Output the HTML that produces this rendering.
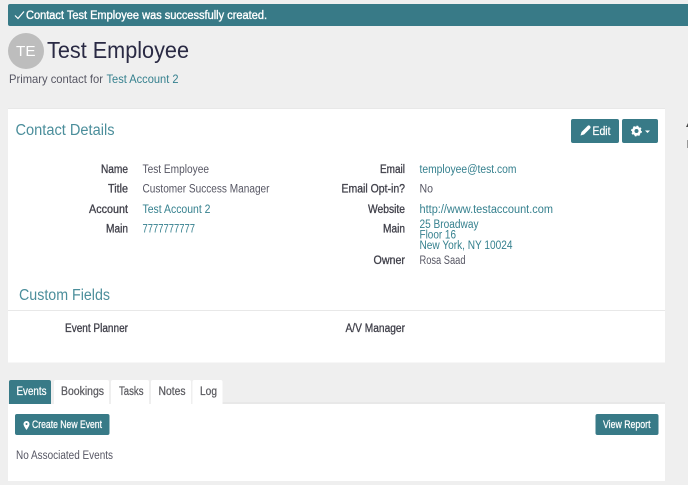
<!DOCTYPE html>
<html><head><meta charset="utf-8"><style>
html,body{margin:0;padding:0;background:#efefef;width:688px;height:485px;overflow:hidden}
svg{display:block}
text{font-family:"Liberation Sans",sans-serif;font-size:11.500px;fill:#565663}
.l{fill:#40404a;font-size:11.500px;stroke:#40404a;stroke-width:.3px}
.a{fill:#35808e}
.h{fill:#4b8e9b;font-size:15.500px}
.w{fill:#fff;stroke:#fff;stroke-width:.25px}
.t{fill:#5b5b60;stroke:#5b5b60;stroke-width:.25px;font-size:11.500px}
</style></head><body>
<svg width="688" height="485" viewBox="0 0 688 485" xmlns="http://www.w3.org/2000/svg" style="filter:blur(.35px)">
<rect width="688" height="485" fill="#efefef"/>
<!-- banner -->
<path d="M688 4H10a2 2 0 0 0-2 2v18a2 2 0 0 0 2 2h678z" fill="#387a87"/>
<path d="M15 15.500l3 3 6-7" fill="none" stroke="#fff" stroke-width="1.200"/>
<text x="26" y="19" class="w" style="font-size:11.500px;stroke-width:.35px" textLength="241" lengthAdjust="spacingAndGlyphs">Contact Test Employee was successfully created.</text>
<!-- header -->
<circle cx="26" cy="51" r="18" fill="#bdbdbd"/>
<text x="16" y="56" style="font-size:14.500px;fill:#fff" textLength="19.500" lengthAdjust="spacingAndGlyphs">TE</text>
<text x="47" y="58" style="font-size:23px;fill:#2a2a44" textLength="142" lengthAdjust="spacingAndGlyphs">Test Employee</text>
<text x="9" y="83" style="font-size:12px" textLength="94" lengthAdjust="spacingAndGlyphs">Primary contact for</text>
<text x="106.500" y="83" class="a" style="font-size:12px" textLength="72" lengthAdjust="spacingAndGlyphs">Test Account 2</text>
<!-- card -->
<rect x="8" y="108.500" width="657" height="254" fill="#fff"/>
<rect x="8" y="108" width="657" height="1" fill="#e8e8e8"/>
<text x="15.500" y="135" class="h" textLength="99" lengthAdjust="spacingAndGlyphs">Contact Details</text>
<rect x="571" y="119" width="48" height="24" rx="2" fill="#387a87"/>
<path d="M580.500 135.500l1-3.500 6-6a1.300 1.300 0 0 1 2.500 2.500l-6 6z" fill="#fff"/>
<text x="592.500" y="135" class="w" textLength="18" lengthAdjust="spacingAndGlyphs" style="font-size:11.500px">Edit</text>
<rect x="622" y="119" width="36" height="24" rx="2" fill="#387a87"/>
<circle cx="636.500" cy="131" r="3.300" fill="none" stroke="#fff" stroke-width="2.600"/>
<circle cx="636.500" cy="131" r="4.600" fill="none" stroke="#fff" stroke-width="1.600" stroke-dasharray="1.800 1.800"/>
<path d="M645 130.500h5l-2.500 2.500z" fill="#fff"/>
<!-- left rows -->
<text x="101" y="173" class="l" textLength="27" lengthAdjust="spacingAndGlyphs">Name</text>
<text x="108" y="192.500" class="l" textLength="20" lengthAdjust="spacingAndGlyphs">Title</text>
<text x="89" y="213" class="l" textLength="39" lengthAdjust="spacingAndGlyphs">Account</text>
<text x="106" y="232.500" class="l" textLength="22" lengthAdjust="spacingAndGlyphs">Main</text>
<text x="142.500" y="173" textLength="66.500" lengthAdjust="spacingAndGlyphs">Test Employee</text>
<text x="142.500" y="192.500" textLength="127" lengthAdjust="spacingAndGlyphs">Customer Success Manager</text>
<text x="142.500" y="213" class="a" textLength="68" lengthAdjust="spacingAndGlyphs">Test Account 2</text>
<text x="142.500" y="232.500" class="a" textLength="52.500" lengthAdjust="spacingAndGlyphs">7777777777</text>
<!-- right rows -->
<text x="380" y="173" class="l" textLength="25" lengthAdjust="spacingAndGlyphs">Email</text>
<text x="341.500" y="192.500" class="l" textLength="63.500" lengthAdjust="spacingAndGlyphs">Email Opt-in?</text>
<text x="368" y="213" class="l" textLength="37" lengthAdjust="spacingAndGlyphs">Website</text>
<text x="383" y="232.500" class="l" textLength="22" lengthAdjust="spacingAndGlyphs">Main</text>
<text x="373.500" y="264" class="l" textLength="31.500" lengthAdjust="spacingAndGlyphs">Owner</text>
<text x="419.500" y="173" class="a" textLength="97" lengthAdjust="spacingAndGlyphs">temployee@test.com</text>
<text x="419.500" y="192.500" textLength="13.500" lengthAdjust="spacingAndGlyphs">No</text>
<text x="419.500" y="213" class="a" textLength="133.500" lengthAdjust="spacingAndGlyphs">http://www.testaccount.com</text>
<text x="419.500" y="228" class="a" textLength="59" lengthAdjust="spacingAndGlyphs">25 Broadway</text>
<text x="419.500" y="238.500" class="a" textLength="36.500" lengthAdjust="spacingAndGlyphs">Floor 16</text>
<text x="419.500" y="249" class="a" textLength="93" lengthAdjust="spacingAndGlyphs">New York, NY 10024</text>
<text x="419.500" y="264" textLength="46" lengthAdjust="spacingAndGlyphs">Rosa Saad</text>
<!-- custom fields -->
<text x="19" y="300" class="h" textLength="91" lengthAdjust="spacingAndGlyphs">Custom Fields</text>
<rect x="8" y="310" width="657" height="1" fill="#e8e8e8"/>
<text x="65" y="332" class="l" textLength="63" lengthAdjust="spacingAndGlyphs">Event Planner</text>
<text x="345.500" y="332" class="l" textLength="59.500" lengthAdjust="spacingAndGlyphs">A/V Manager</text>
<!-- tabs -->
<rect x="222" y="402" width="443" height="2" fill="#e8e8e8"/>
<path d="M9 404v-22a2 2 0 0 1 2-2h38a2 2 0 0 1 2 2v22z" fill="#387a87"/>
<path d="M54 404v-22a2 2 0 0 1 2-2h51a2 2 0 0 1 2 2v22z" fill="#fff"/>
<path d="M111 404v-22a2 2 0 0 1 2-2h34a2 2 0 0 1 2 2v22z" fill="#fff"/>
<path d="M151 404v-22a2 2 0 0 1 2-2h36a2 2 0 0 1 2 2v22z" fill="#fff"/>
<path d="M192.500 404v-22a2 2 0 0 1 2-2h26a2 2 0 0 1 2 2v22z" fill="#fff"/>
<text x="16.500" y="395" class="w" style="font-size:11.500px" textLength="30" lengthAdjust="spacingAndGlyphs">Events</text>
<text x="61" y="395" class="t" textLength="43" lengthAdjust="spacingAndGlyphs">Bookings</text>
<text x="119" y="395" class="t" textLength="24.500" lengthAdjust="spacingAndGlyphs">Tasks</text>
<text x="158.500" y="395" class="t" textLength="27" lengthAdjust="spacingAndGlyphs">Notes</text>
<text x="200" y="395" class="t" textLength="17" lengthAdjust="spacingAndGlyphs">Log</text>
<!-- panel -->
<rect x="8" y="404" width="657" height="77" fill="#fff"/>
<rect x="15" y="414" width="94.500" height="21" rx="2" fill="#387a87"/>
<path d="M26.500 430c-2-3-3-4.500-3-6a3 3 0 0 1 6 0c0 1.500-1 3-3 6z" fill="#fff"/>
<circle cx="26.500" cy="424" r="1" fill="#387a87"/>
<text x="32" y="428" class="w" style="font-size:11px" textLength="70" lengthAdjust="spacingAndGlyphs">Create New Event</text>
<text x="16" y="459" textLength="97" lengthAdjust="spacingAndGlyphs">No Associated Events</text>
<rect x="595.500" y="414" width="63" height="21" rx="2" fill="#387a87"/>
<text x="603" y="428" class="w" style="font-size:11px" textLength="47.500" lengthAdjust="spacingAndGlyphs">View Report</text>
<!-- right edge fragments -->
<path d="M686 127l2-4v4z" fill="#444"/>
<rect x="687" y="140" width="1" height="8" fill="#999"/>
</svg>
</body></html>
